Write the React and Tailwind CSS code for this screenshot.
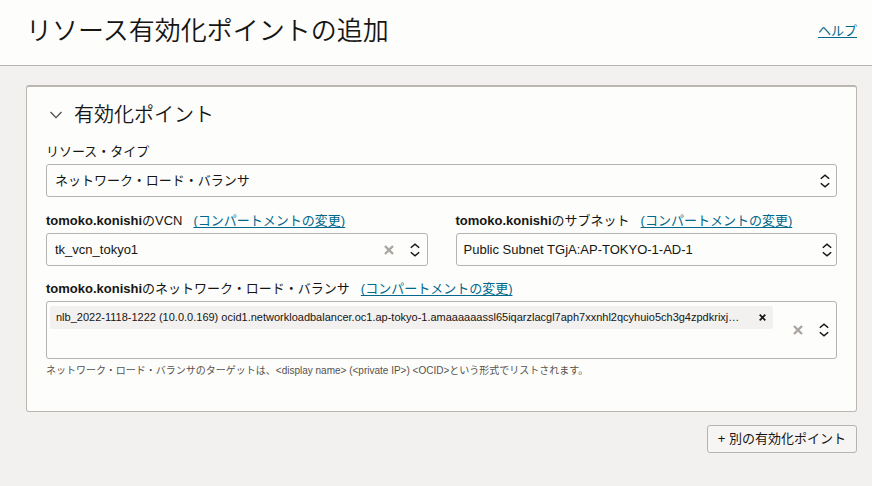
import React, { useState } from 'react'

function Arrows() {
  return (
    <svg viewBox="0 0 10 14" className='w-[10px] h-[14px] shrink-0 pointer-events-none' fill="none" stroke="#161513" strokeWidth="1.5">
      <path d="M0.8 4.8 L5 1.2 L9.2 4.8" />
      <path d="M0.8 9.2 L5 12.8 L9.2 9.2" />
    </svg>
  )
}

function Cross({ className }) {
  return (
    <svg viewBox="0 0 10 10" className={className} fill="none" stroke="currentColor" strokeWidth="2.4">
      <path d="M1 1 L9 9 M9 1 L1 9" />
    </svg>
  )
}

function Label({ id, name, text, link }) {
  return (
    <div className='flex items-center h-[22px] mb-px gap-[11px] whitespace-nowrap'>
      <label htmlFor={id}>{name && <b>{name}</b>}{text}</label>
      {link && <a href="#compartment" className='text-[#00688c] underline underline-offset-2'>(コンパートメントの変更)</a>}
    </div>
  )
}

function App() {
  let [vcn, setVcn] = useState("tk_vcn_tokyo1")
  let [targets, setTargets] = useState([
    "nlb_2022-1118-1222 (10.0.0.169) ocid1.networkloadbalancer.oc1.ap-tokyo-1.amaaaaaassl65iqarzlacgl7aph7xxnhl2qcyhuio5ch3g4zpdkrixj…"
  ])

  return (
    <div className='min-h-screen bg-[#f3f1f0] text-[#161513] text-[13px] font-["Liberation_Sans","Noto_Sans_CJK_JP",sans-serif]'>
      <header className='flex items-center justify-between bg-[#fdfdfb] border-b border-[#b7b3ae] pl-[26px] pr-[15px] pt-[13px] pb-4'>
        <h1 className='text-[26px] leading-9 font-[350]'>リソース有効化ポイントの追加</h1>
        <a href="#help" className='text-[#00688c] underline underline-offset-2'>ヘルプ</a>
      </header>

      <main className='pl-[26px] pr-[15px] pt-[19px]'>
        <section className='bg-[#fdfdfb] border border-t-2 border-[#bcb6b1] rounded-[3px] px-[19px] pt-3 pb-8'>
          <h2 className='text-[20px] leading-8 font-[350] mb-[10px]'>
            <button type="button" className='flex items-center gap-3'>
              <svg viewBox="0 0 12 8" className='w-3 h-2 ml-1' fill="none" stroke="#4a4744" strokeWidth="1.2">
                <path d="M0.5 1 L6 6.6 L11.5 1" />
              </svg>
              有効化ポイント
            </button>
          </h2>

          <Label id="type" text="リソース・タイプ" />
          <div className='relative'>
            <select id="type" className='appearance-none w-full h-[33px] pl-2 pr-8 border border-[#b7b3ae] rounded-[3px]'>
              <option>ネットワーク・ロード・バランサ</option>
            </select>
            <span className='absolute right-[7px] inset-y-0 flex items-center pointer-events-none'><Arrows /></span>
          </div>

          <div className='grid grid-cols-2 gap-7 mt-[13px]'>
            <div>
              <Label id="vcn" name="tomoko.konishi" text="のVCN" link />
              <div className='flex items-center h-[33px] pl-2 pr-[7px] border border-[#b7b3ae] rounded-[3px]'>
                <input id="vcn" type="text" value={vcn} onChange={(e) => setVcn(e.target.value)} className='flex-1 min-w-0 outline-none' />
                <button type="button" aria-label="クリア" onClick={() => setVcn("")} className='mr-4 text-[#aaa5a0]'><Cross className='w-[10px] h-[10px]' /></button>
                <Arrows />
              </div>
            </div>
            <div>
              <Label id="subnet" name="tomoko.konishi" text="のサブネット" link />
              <div className='relative'>
                <select id="subnet" className='appearance-none w-full h-[33px] pl-[7px] pr-8 border border-[#b7b3ae] rounded-[3px]'>
                  <option>Public Subnet TGjA:AP-TOKYO-1-AD-1</option>
                </select>
                <span className='absolute right-[5px] inset-y-0 flex items-center pointer-events-none'><Arrows /></span>
              </div>
            </div>
          </div>

          <div className='mt-3'>
            <Label id="nlb" name="tomoko.konishi" text="のネットワーク・ロード・バランサ" link />
            <div className='flex items-center min-h-[58px] pl-[3px] pr-[7px] border border-[#b7b3ae] rounded-[3px]'>
              <div className='flex-1 min-w-0 self-stretch pt-1 mr-5'>
                {targets.map((t) => (
                  <div key={t} className='flex items-center justify-between h-[23px] bg-[#f3f1f0] rounded-[2px] pl-[6px] pr-[7px] text-[11px]'>
                    <span className='truncate'>{t}</span>
                    <button type="button" aria-label="削除" onClick={() => setTargets(targets.filter((x) => x !== t))}><Cross className='w-[7px] h-[7px]' /></button>
                  </div>
                ))}
                <input id="nlb" type="text" className='w-full h-6 px-2 outline-none' />
              </div>
              <button type="button" aria-label="すべてクリア" onClick={() => setTargets([])} className='mr-4 text-[#aaa5a0]'><Cross className='w-[10px] h-[10px]' /></button>
              <Arrows />
            </div>
            <p className='mt-1 text-[10px] leading-4 text-[#55514e]'>ネットワーク・ロード・バランサのターゲットは、&lt;display name&gt; (&lt;private IP&gt;) &lt;OCID&gt;という形式でリストされます。</p>
          </div>
        </section>

        <div className='flex justify-end mt-[13px]'>
          <button type="button" className='h-7 px-[10px] bg-[#f7f5f4] border border-[#b7b3ae] rounded-[3px]'>+ 別の有効化ポイント</button>
        </div>
      </main>
    </div>
  )
}

export default App
